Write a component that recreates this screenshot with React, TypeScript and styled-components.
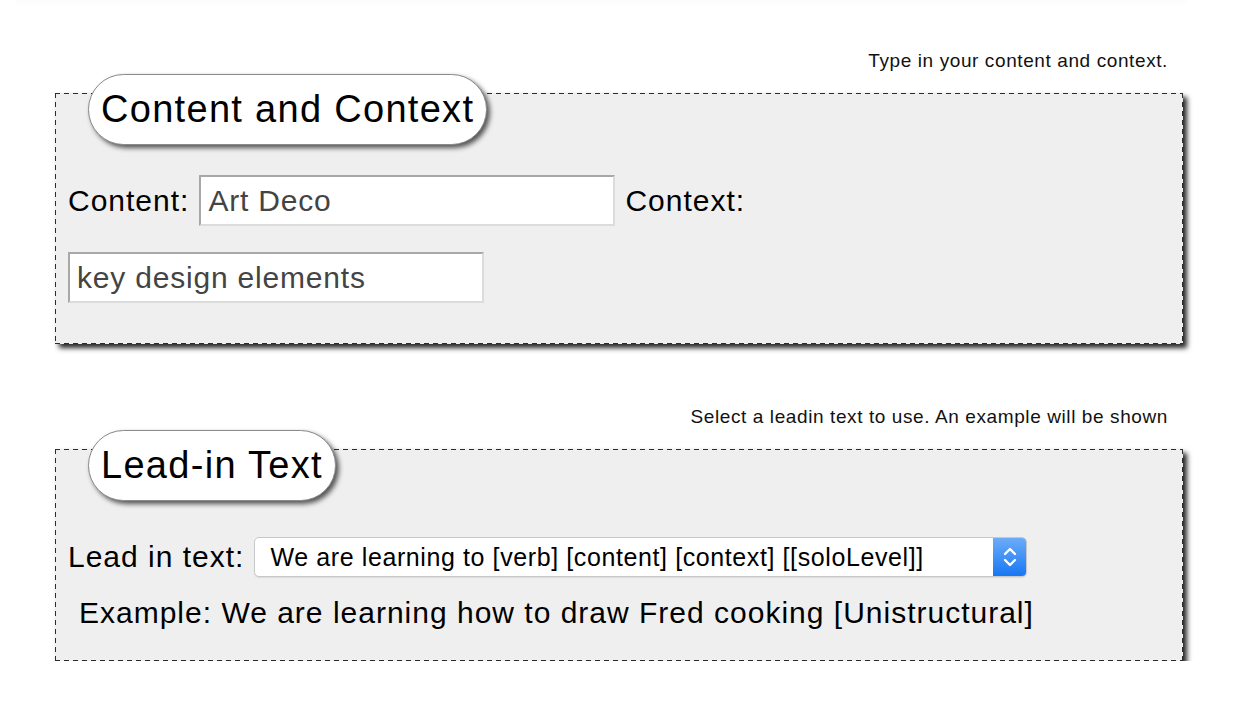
import styled, { createGlobalStyle } from 'styled-components'

const GlobalStyle = createGlobalStyle`
  body {
    margin: 0;
    background: #fff;
    font-family: 'Liberation Sans', Arial, Helvetica, sans-serif;
    color: #000;
  }
`

const TopEdge = styled.div`
  height: 1px;
  margin: -1px 50px 0 15px;
  box-shadow: 0 0 6px rgba(0, 0, 0, 0.12);
`

const Page = styled.main`
  width: 1128px;
  margin-left: 55px;
  padding-top: 50px;
`

const Section = styled.section<{ $gap?: number }>`
  margin-top: ${(p) => p.$gap ?? 0}px;
`

const Hint = styled.p`
  margin: 0 0 21px;
  padding-right: 15px;
  text-align: right;
  font-size: 19px;
  line-height: 22px;
  letter-spacing: 0.6px;
  color: #111;
`

const dash = '#2c2c2c'

const Panel = styled.div<{ $bottom: number }>`
  padding: 1px 13px ${(p) => p.$bottom + 1}px;
  background:
    repeating-linear-gradient(90deg, ${dash} 0 5px, transparent 5px 9px) top left / 100% 1px no-repeat,
    repeating-linear-gradient(90deg, ${dash} 0 5px, transparent 5px 9px) bottom left / 100% 1px no-repeat,
    repeating-linear-gradient(180deg, ${dash} 0 5px, transparent 5px 9px) top left / 1px 100% no-repeat,
    repeating-linear-gradient(180deg, ${dash} 0 5px, transparent 5px 9px) top right / 1px 100% no-repeat,
    #efefef;
  box-shadow: 4px 4px 5px rgba(0, 0, 0, 0.85);
`

const Pill = styled.h2`
  display: inline-block;
  margin: -20px 0 0 20px;
  padding: 11px 12px 12px;
  background: #fff;
  border: 1px solid #8a8a8a;
  border-radius: 36px;
  box-shadow: 3px 3px 5px rgba(0, 0, 0, 0.65);
  font-size: 38px;
  font-weight: 400;
  line-height: 46px;
  letter-spacing: 1.3px;
`

const Row = styled.div<{ $top: number }>`
  display: flex;
  align-items: center;
  gap: 10px;
  margin-top: ${(p) => p.$top}px;
`

const Label = styled.label`
  font-size: 30px;
  letter-spacing: 1px;
  white-space: nowrap;
`

const TextInput = styled.input`
  box-sizing: border-box;
  width: 416px;
  height: 51px;
  padding: 0 7px;
  background: #fff;
  border-style: solid;
  border-width: 2px;
  border-color: #a8a8a8 #dcdcdc #dcdcdc #a8a8a8;
  font-family: inherit;
  font-size: 30px;
  letter-spacing: 0.8px;
  color: #444;
  outline: none;
`

const SelectBox = styled.div`
  display: flex;
  width: 773px;
  height: 40px;
  box-sizing: border-box;
  background: #fff;
  border: 1px solid #c8c8c8;
  border-radius: 5px;
  overflow: hidden;
  box-shadow: 0 1px 1px rgba(0, 0, 0, 0.08);
`

const Select = styled.select`
  flex: 1;
  appearance: none;
  border: none;
  background: transparent;
  padding: 0 0 0 15px;
  font-family: inherit;
  font-size: 25px;
  letter-spacing: 0.6px;
  color: #000;
  outline: none;
`

const Stepper = styled.span`
  width: 33px;
  display: flex;
  align-items: center;
  justify-content: center;
  background: linear-gradient(#6cacf9, #1877f4);
`

const Example = styled.p`
  margin: 19px 0 0;
  padding-left: 11px;
  font-size: 30px;
  line-height: 34px;
  letter-spacing: 1px;
`

const leadins = [
  'We are learning to [verb] [content] [context] [[soloLevel]]',
  'We are learning how to [verb] [content] [context] [[soloLevel]]',
]

export default function App() {
  return (
    <>
      <GlobalStyle />
      <TopEdge />
      <Page>
        <Section>
          <Hint>Type in your content and context.</Hint>
          <Panel $bottom={40}>
            <Pill>Content and Context</Pill>
            <Row $top={30}>
              <Label htmlFor="content">Content:</Label>
              <TextInput id="content" defaultValue="Art Deco" />
              <Label htmlFor="context">Context:</Label>
            </Row>
            <Row $top={26}>
              <TextInput id="context" defaultValue="key design elements" />
            </Row>
          </Panel>
        </Section>
        <Section $gap={62}>
          <Hint>Select a leadin text to use. An example will be shown</Hint>
          <Panel $bottom={30}>
            <Pill>Lead-in Text</Pill>
            <Row $top={36}>
              <Label htmlFor="leadin">Lead in text:</Label>
              <SelectBox>
                <Select id="leadin" defaultValue={leadins[0]}>
                  {leadins.map((l) => (
                    <option key={l}>{l}</option>
                  ))}
                </Select>
                <Stepper>
                  <svg width="16" height="26" viewBox="0 0 16 26" fill="none" stroke="#fff" strokeWidth="2.4" strokeLinecap="round" strokeLinejoin="round">
                    <path d="M3 10 L8 5 L13 10" />
                    <path d="M3 16 L8 21 L13 16" />
                  </svg>
                </Stepper>
              </SelectBox>
            </Row>
            <Example>Example: We are learning how to draw Fred cooking [Unistructural]</Example>
          </Panel>
        </Section>
      </Page>
    </>
  )
}
